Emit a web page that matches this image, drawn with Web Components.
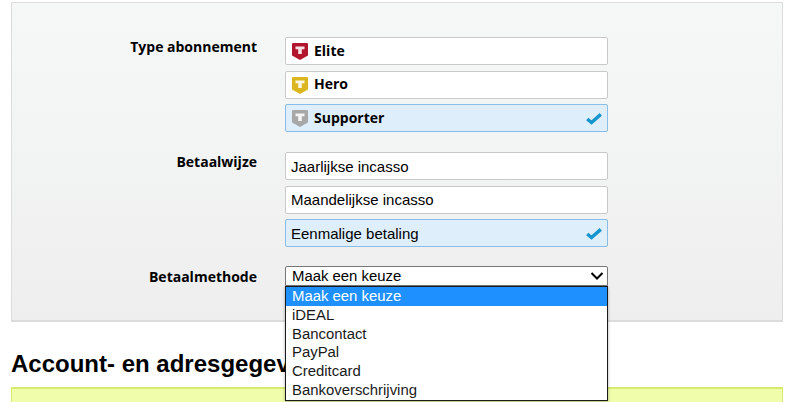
<!DOCTYPE html>
<html lang="nl">
<head>
<meta charset="utf-8">
<title>Abonnement</title>
<style>
  html, body { margin: 0; height: 402px; overflow: hidden; background: #fff; }
  body { padding: 2px 17px 0 11px; font-family: "Liberation Sans", Arial, sans-serif; color: #000; }
</style>
</head>
<body>
<form-panel>
  <form-row label="Type abonnement">
    <choice-option tier="#b2162f" bold>Elite</choice-option>
    <choice-option tier="#dcb61f" bold>Hero</choice-option>
    <choice-option tier="#a8a8a8" bold selected>Supporter</choice-option>
  </form-row>
  <form-row label="Betaalwijze">
    <choice-option>Jaarlijkse incasso</choice-option>
    <choice-option>Maandelijkse incasso</choice-option>
    <choice-option selected>Eenmalige betaling</choice-option>
  </form-row>
  <form-row label="Betaalmethode" compact>
    <open-select value="Maak een keuze" options="Maak een keuze|iDEAL|Bancontact|PayPal|Creditcard|Bankoverschrijving"></open-select>
  </form-row>
</form-panel>
<section-title>Account- en adresgegevens</section-title>
<notice-box></notice-box>

<script>
class FormPanel extends HTMLElement {
  constructor() {
    super();
    this.attachShadow({ mode: "open" });
    this.shadowRoot.innerHTML = `
      <style>
        :host {
          display: flex;
          flex-direction: column;
          gap: 20px;
          height: 320px;
          box-sizing: border-box;
          padding: 34px 0 0;
          border: 1px solid #dcdcdc;
          border-bottom-width: 2px;
          background: linear-gradient(#f6f8f8, #eeeeee);
        }
      </style>
      <slot></slot>
    `;
  }
}

class FormRow extends HTMLElement {
  constructor() {
    super();
    this.attachShadow({ mode: "open" });
    this.shadowRoot.innerHTML = `
      <style>
        :host {
          display: grid;
          grid-template-columns: 245px 323px;
          column-gap: 28px;
        }
        :host([compact]) { margin-top: -1px; }
        .label {
          text-align: right;
          font: bold 14px/20px "Open Sans", sans-serif;
        }
        :host([compact]) .label { padding-top: 1px; }
        .controls { display: flex; flex-direction: column; gap: 5.5px; }
      </style>
      <div class="label"></div>
      <div class="controls"><slot></slot></div>
    `;
    this.shadowRoot.querySelector(".label").textContent = this.getAttribute("label");
  }
}

class ChoiceOption extends HTMLElement {
  constructor() {
    super();
    this.attachShadow({ mode: "open" });
    const tier = this.getAttribute("tier");
    this.shadowRoot.innerHTML = `
      <style>
        :host {
          display: flex;
          align-items: center;
          gap: 6px;
          height: 28px;
          box-sizing: border-box;
          padding: 0 4px 0 5px;
          border: 1px solid #c9c9c9;
          border-radius: 2px;
          background: #fff;
          font: 15px "Liberation Sans", Arial, sans-serif;
        }
        :host([bold]) {
          padding: 0 4px 2px 6px;
          gap: 6px;
          font: bold 14px "Open Sans", sans-serif;
        }
        :host([selected]) { background: #deeefb; border-color: #87bde8; }
        svg { flex: none; }
        .shield { margin-top: 3px; }
        .check { margin-left: auto; margin-top: 2px; margin-right: 1px; }
        :host([bold]) .check { margin-top: 4px; }
      </style>
      ${tier ? `<svg class="shield" width="16" height="17" viewBox="0 0 16 17">
        <path d="M0 1q0-1 1-1h14q1 0 1 1v11.5L8 17 0 12.5z" fill="${tier}"/>
        <path d="M3.5 3.5h9v2.8H9.8V11H6.2V6.3H3.5z" fill="#fff" fill-opacity=".88"/>
      </svg>` : ""}
      <slot></slot>
      ${this.hasAttribute("selected") ? `<svg class="check" width="16" height="12" viewBox="0 0 16 12">
        <path d="M1.2 6l4.3 3.6L14.8 1.4" fill="none" stroke="#1596cf" stroke-width="3.4"/>
      </svg>` : ""}
    `;
  }
}

class OpenSelect extends HTMLElement {
  constructor() {
    super();
    this.attachShadow({ mode: "open" });
    const options = this.getAttribute("options").split("|");
    this.shadowRoot.innerHTML = `
      <style>
        :host {
          display: block;
          position: relative;
          height: 20px;
          font: 14.9px "Liberation Sans", Arial, sans-serif;
        }
        .box {
          display: flex;
          align-items: center;
          justify-content: space-between;
          height: 20px;
          box-sizing: border-box;
          padding: 0 3px 0 6px;
          background: #fff;
          border: 1px solid #767676;
          border-radius: 2px 2px 0 0;
        }
        .list {
          position: absolute;
          left: 0;
          right: 0;
          top: 20px;
          border: 1px solid #1a1a1a;
          background: #fff;
          box-shadow: 0 1px 3px rgba(0, 0, 0, .3);
        }
        .item { height: 18.8px; line-height: 18.8px; padding-left: 6px; color: #1a1a1a; }
        .item.active { background: #1e90ff; color: #fff; }
      </style>
      <div class="box">
        <span></span>
        <svg width="14" height="10" viewBox="0 0 14 10"><path d="M1.5 2l5.5 5.5L12.5 2" fill="none" stroke="#000" stroke-width="2"/></svg>
      </div>
      <div class="list">
        ${options.map((o, i) => `<div class="item${i === 0 ? " active" : ""}">${o}</div>`).join("")}
      </div>
    `;
    this.shadowRoot.querySelector(".box span").textContent = this.getAttribute("value");
  }
}

class SectionTitle extends HTMLElement {
  constructor() {
    super();
    this.attachShadow({ mode: "open" });
    this.shadowRoot.innerHTML = `
      <style>
        :host {
          display: block;
          margin-top: 28px;
          font: bold 24px/28px "Liberation Sans", Arial, sans-serif;
          white-space: nowrap;
        }
      </style>
      <slot></slot>
    `;
  }
}

class NoticeBox extends HTMLElement {
  constructor() {
    super();
    this.attachShadow({ mode: "open" });
    this.shadowRoot.innerHTML = `
      <style>
        :host {
          display: block;
          margin-top: 9px;
          height: 13px;
          background: #f0fdab;
          border: 1px solid #d6ec6e;
          border-top-width: 2px;
          border-bottom: 0;
        }
      </style>
    `;
  }
}

customElements.define("form-panel", FormPanel);
customElements.define("form-row", FormRow);
customElements.define("choice-option", ChoiceOption);
customElements.define("open-select", OpenSelect);
customElements.define("section-title", SectionTitle);
customElements.define("notice-box", NoticeBox);
</script>
</body>
</html>
